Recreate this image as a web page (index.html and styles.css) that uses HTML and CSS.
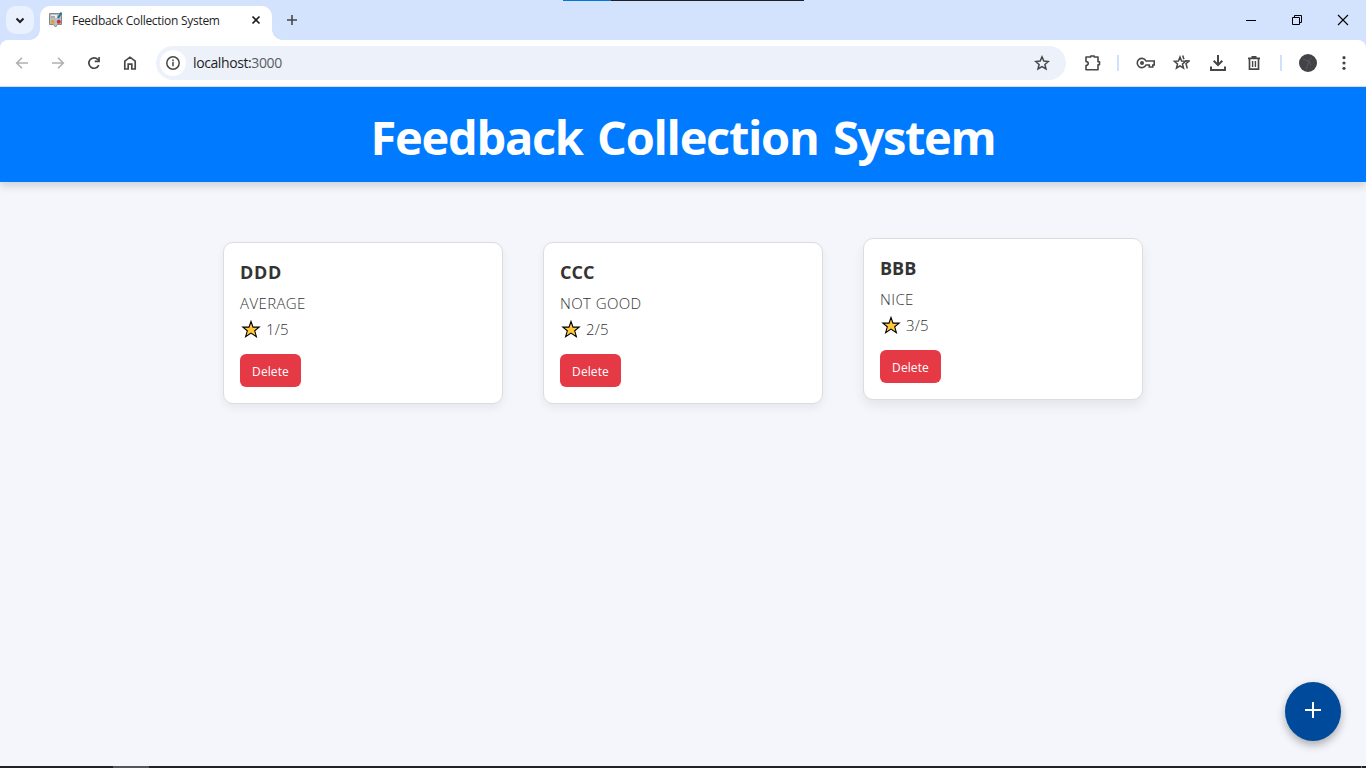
FILE: index.html
```html
<!DOCTYPE html>
<html lang="en">
<head>
<meta charset="utf-8">
<title>Feedback Collection System</title>
<link rel="stylesheet" href="styles.css">
</head>
<body>
<div class="edge-progress"><span class="edge-fill"></span></div>
<div class="tabstrip">
  <div class="tab-search"><svg width="28" height="28" viewBox="0 0 28 28"><path d="M10.500 12.500l3.500 3.500 3.500-3.500" fill="none" stroke="#1f1f1f" stroke-width="2"/></svg></div>
  <div class="tab">
    <svg class="favicon" width="16" height="16" viewBox="0 0 16 16"><path d="M1.500 1.500h12v11H9.500L7.500 15l-2-2.500h-4z" fill="#b9bec2" stroke="#85898d"/><path d="M3 3h6v3H3z" fill="#eceeef"/><path d="M3 5h4" stroke="#666"/><circle cx="4.700" cy="9.800" r="2" fill="#dca437"/><circle cx="10.800" cy="9.800" r="2" fill="#c9343c"/><path d="M13.500.5L10 6" stroke="#28759a" stroke-width="2"/></svg>
    <span class="tab-title">Feedback Collection System</span>
    <svg class="tab-close" width="10" height="10" viewBox="0 0 10 10"><path d="M1.500 1.500l7 7M8.500 1.500l-7 7" stroke="#1f1f1f" stroke-width="1.700"/></svg>
  </div>
  <svg class="new-tab" width="12" height="12" viewBox="0 0 12 12"><path d="M6 1v10M1 6h10" stroke="#474747" stroke-width="1.600"/></svg>
  <div class="window-controls">
    <svg width="46" height="40" viewBox="0 0 46 40"><path d="M18 20.500h10" stroke="#000"/></svg>
    <svg width="46" height="40" viewBox="0 0 46 40"><path d="M18.500 17.500h7v7h-7zM20.500 17.500v-2h7v7h-2" fill="none" stroke="#000"/></svg>
    <svg width="46" height="40" viewBox="0 0 46 40"><path d="M18 15l10 10M28 15l-10 10" stroke="#000" stroke-width="1.100"/></svg>
  </div>
</div>
<div class="toolbar-wrap">
<div class="toolbar">
  <div class="nav">
    <svg width="16" height="16" viewBox="0 0 16 16"><path d="M14 8H3M8 2.700L2.700 8 8 13.300" fill="none" stroke="#b0b0b0" stroke-width="1.600"/></svg>
    <svg width="16" height="16" viewBox="0 0 16 16"><path d="M2 8h11M8 2.700L13.300 8 8 13.300" fill="none" stroke="#b0b0b0" stroke-width="1.600"/></svg>
    <svg width="16" height="16" viewBox="0 0 16 16"><path d="M12.800 10.200A5.200 5.200 0 1 1 11.800 4.400L13 5.700" fill="none" stroke="#474747" stroke-width="1.700"/><path d="M13.900 2v5.200H8.700V5.600h3.600V2z" fill="#474747"/></svg>
    <svg width="16" height="16" viewBox="0 0 16 16"><path d="M2.800 14V6.200L8 2.200l5.200 4V14H9.800V9.200H6.200V14z" fill="none" stroke="#474747" stroke-width="1.700"/></svg>
  </div>
  <div class="omnibox">
    <span class="site-info"><svg width="16" height="16" viewBox="0 0 16 16"><circle cx="8" cy="8" r="6.200" fill="none" stroke="#474747" stroke-width="1.500"/><path d="M8 7v4.300M8 4.600v1.600" stroke="#474747" stroke-width="1.500"/></svg></span>
    <span class="url">localhost:<span class="port">3000</span></span>
    <svg class="bookmark" width="16" height="16" viewBox="0 0 16 16"><path d="M8 1.900l1.800 4.200 4.600.4-3.500 3 1.100 4.500L8 11.600 4 14l1.100-4.500-3.500-3 4.600-.4z" fill="none" stroke="#474747" stroke-width="1.500"/></svg>
  </div>
  <div class="actions">
    <svg class="puzzle" width="18" height="18" viewBox="0 0 18 18"><path d="M2 3h4.800V2h3.400v1H14v4.700h1.500v3H14V15.800H2v-4.200c3-.6 3-3.600 0-4.200z" fill="none" stroke="#474747" stroke-width="1.600" stroke-linejoin="round"/></svg>
    <span class="divider"></span>
    <svg class="key" width="20" height="16" viewBox="0 0 20 16"><path d="M10 6a4.600 4.600 0 1 0 0 4h3.300v2h3.500v-2h1.400V6z" fill="none" stroke="#474747" stroke-width="1.600"/><circle cx="6" cy="8" r="2" fill="#474747"/></svg>
    <svg class="stars" width="18" height="18" viewBox="0 0 18 18"><path d="M8 3l1.600 4 4 .3-3.100 2.700 1 4L8 11.800 4.500 14l1-4-3.100-2.700 4-.3z" fill="none" stroke="#474747" stroke-width="1.500"/><path d="M10.700 1.500l1.200 3.800M13.200 6.700l4 .3-3.200 2.700 1.300 4.800" fill="none" stroke="#474747" stroke-width="1.500"/></svg>
    <svg class="download" width="18" height="18" viewBox="0 0 18 18"><path d="M9 1v10M4.700 6.700L9 11l4.300-4.300M2 12.500V16h14v-3.500" fill="none" stroke="#474747" stroke-width="2"/></svg>
    <svg class="trash" width="16" height="16" viewBox="0 0 16 16"><path d="M2 3.300h12M5.500 1.900h5M3.500 3.500v10.700h9V3.500" fill="none" stroke="#474747" stroke-width="1.700"/><path d="M6.600 6v6M9.400 6v6" stroke="#474747" stroke-width="1.400"/></svg>
    <span class="divider"></span>
    <svg class="avatar" width="18" height="18" viewBox="0 0 18 18"><circle cx="9" cy="9" r="9" fill="#424247"/><path d="M7 15l3-8 2 4M4 5l5 2 4-3" fill="none" stroke="#606065" stroke-width=".8"/></svg>
    <svg class="kebab" width="16" height="16" viewBox="0 0 16 16" fill="#474747"><circle cx="8" cy="2.700" r="1.600"/><circle cx="8" cy="8" r="1.600"/><circle cx="8" cy="13.300" r="1.600"/></svg>
  </div>
</div>
</div>
<header class="page-header"><h1 class="page-title">Feedback Collection System</h1></header>
<main class="feedback-list">
  <article class="card">
    <h2 class="card-title wide">DDD</h2><p class="comment">AVERAGE</p>
    <p class="rating"><svg class="star" width="20" height="20" viewBox="0 0 20 20"><path d="M10 2.500l2 5.600h6.200l-4.500 3.700 1.700 5.900L10 14.100l-5.400 3.600 1.700-5.900-4.500-3.700H8z" fill="#ffc83d" stroke="#000" stroke-width="1.100"/></svg><span>1/5</span></p>
    <button class="delete">Delete</button>
  </article>
  <article class="card">
    <h2 class="card-title">CCC</h2><p class="comment">NOT GOOD</p>
    <p class="rating"><svg class="star" width="20" height="20" viewBox="0 0 20 20"><path d="M10 2.500l2 5.600h6.200l-4.500 3.700 1.700 5.900L10 14.100l-5.400 3.600 1.700-5.900-4.500-3.700H8z" fill="#ffc83d" stroke="#000" stroke-width="1.100"/></svg><span>2/5</span></p>
    <button class="delete">Delete</button>
  </article>
  <article class="card raised">
    <h2 class="card-title">BBB</h2><p class="comment">NICE</p>
    <p class="rating"><svg class="star" width="20" height="20" viewBox="0 0 20 20"><path d="M10 2.500l2 5.600h6.200l-4.500 3.700 1.700 5.900L10 14.100l-5.400 3.600 1.700-5.900-4.500-3.700H8z" fill="#ffc83d" stroke="#000" stroke-width="1.100"/></svg><span>3/5</span></p>
    <button class="delete">Delete</button>
  </article>
</main>
<button class="fab" aria-label="Add feedback"><svg width="16" height="16" viewBox="0 0 16 16"><path d="M8 0v16M0 8h16" stroke="#fff" stroke-width="2"/></svg></button>
<div class="taskbar"><span class="task-active"></span><span class="show-desktop"></span></div>
</body>
</html>
```
FILE: styles.css
```css
* { box-sizing: border-box; }
body { margin: 0; width: 1366px; height: 768px; overflow: hidden; display: flex; flex-direction: column; background: #f4f6fb; font-family: "Open Sans", "Noto Sans", sans-serif; }
svg { display: block; flex: none; }
h1, h2, p { margin: 0; }
button { border: 0; font-family: inherit; }

.edge-progress { position: absolute; left: 563px; top: 0; width: 241px; height: 1px; background: #202024; }
.edge-fill { display: block; width: 48px; height: 1px; background: #0078d7; }
.tabstrip { height: 40px; flex: none; display: flex; align-items: center; background: #d3e3fd; padding-left: 6px; }
.tab-search { width: 28px; height: 28px; border-radius: 10px; background: #e9f1fe; }
.tab { position: relative; align-self: flex-end; display: flex; align-items: center; width: 232px; height: 34px; margin-left: 6px; padding: 0 11px 6px 8px; border-radius: 10px 10px 0 0; background: #fff; }
.tab::before, .tab::after { content: ""; position: absolute; bottom: 0; width: 10px; height: 10px; }
.tab::before { left: -10px; background: radial-gradient(circle at 0 0, transparent 9.500px, #fff 10px); }
.tab::after { right: -10px; background: radial-gradient(circle at 100% 0, transparent 9.500px, #fff 10px); }
.tab-title { margin-left: 8px; flex: 1; color: #1f1f1f; font-size: 12px; letter-spacing: -.28px; white-space: nowrap; }
.new-tab { margin-left: 14px; }
.window-controls { display: flex; margin-left: auto; }
.toolbar-wrap { flex: none; background: #d3e3fd; }
.toolbar { height: 47px; display: flex; align-items: center; padding: 0 14px; border-bottom: 1px solid #dcdfe3; background: #fff; border-radius: 8px 8px 0 0; }
.nav { display: flex; gap: 20px; }
.omnibox { flex: none; display: flex; align-items: center; width: 910px; height: 34px; margin-left: 18px; padding: 0 16px 0 4px; border-radius: 17px; background: #ecf1fa; }
.site-info { display: grid; place-items: center; width: 26px; height: 26px; border-radius: 50%; background: #fff; }
.url { flex: 1; margin: -1px 0 0 7px; font-size: 14px; letter-spacing: -.4px; color: #1f1f1f; }
.port { color: #5a5d61; }
.actions { display: flex; align-items: center; flex: 1; margin-left: 18px; }
.divider { flex: none; width: 2px; height: 16px; background: #cfe1fd; }
.puzzle { margin-right: 15px; }
.key { margin-left: 17px; }
.stars { margin-left: 16px; }
.download { margin-left: 19px; }
.trash { margin: 0 18px 0 19px; }
.avatar { margin-left: 17px; }
.kebab { margin-left: 19px; }

.page-header { height: 95px; flex: none; display: flex; justify-content: center; background: #007bff; box-shadow: 0 4px 8px rgba(0,0,0,.15); }
.page-title { padding-top: 17px; color: #fff; font-size: 47px; font-weight: 700; line-height: 66px; letter-spacing: -1.300px; word-spacing: 3.500px; white-space: nowrap; }
.feedback-list { flex: 1; display: flex; justify-content: center; align-items: flex-start; gap: 40px; padding-top: 60px; }
.card { width: 280px; height: 162px; padding: 16px; border: 1px solid #ddd; border-radius: 10px; background: #fff; box-shadow: 0 4px 8px rgba(0,0,0,.06); }
.raised { transform: translateY(-4px); box-shadow: 0 6px 12px rgba(0,0,0,.07); }
.card-title { height: 32px; line-height: 26px; font-size: 18px; font-weight: 700; color: #333; }
.wide { letter-spacing: .7px; }
.comment { height: 25px; line-height: 25px; font-size: 15px; font-weight: 300; letter-spacing: .4px; color: #333; }
.rating { display: flex; align-items: center; height: 26px; font-size: 15px; font-weight: 300; letter-spacing: .2px; color: #333; }
.star { margin: 0 5px 0 1px; }
.delete { display: block; width: 61px; height: 33px; margin-top: 12px; padding: 1px 0 0; border-radius: 6px; background: #e63946; color: #fff; font-size: 12px; letter-spacing: .1px; }
.fab { position: absolute; left: 1285px; top: 682px; width: 56px; height: 59px; padding: 0 0 3px; border-radius: 50%; background: #004a9b; display: grid; place-items: center; box-shadow: 0 4px 8px rgba(0,0,0,.3); }
.taskbar { height: 2px; flex: none; display: flex; background: #202126; padding-left: 113px; }
.task-active { width: 36px; background: #55565a; }
.show-desktop { width: 1px; margin: 0 4px 0 auto; background: #77787c; }
```
